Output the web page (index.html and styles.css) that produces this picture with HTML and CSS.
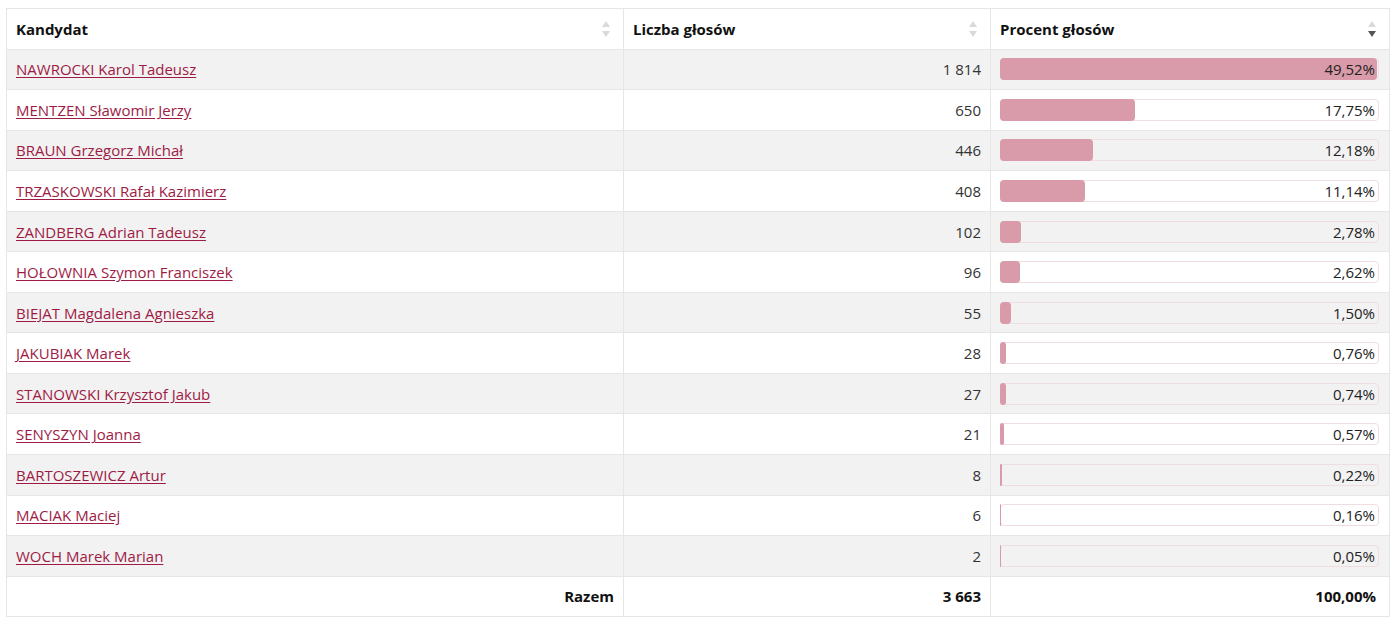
FILE: index.html
```html
<!DOCTYPE html>
<html lang="pl">
<head>
<meta charset="utf-8">
<title>Wyniki</title>
<link rel="stylesheet" href="styles.css">
</head>
<body>
<table class="results">
  <colgroup>
    <col class="c1"><col class="c2"><col class="c3">
  </colgroup>
  <thead>
    <tr>
      <th><div class="th-in"><span>Kandydat</span><span class="sort"><svg width="8" height="16" viewBox="0 0 8 16"><path d="M4 0L8 6H0Z" fill="#dadada"/><path d="M4 16L8 10H0Z" fill="#dadada"/></svg></span></div></th>
      <th><div class="th-in"><span>Liczba głosów</span><span class="sort"><svg width="8" height="16" viewBox="0 0 8 16"><path d="M4 0L8 6H0Z" fill="#dadada"/><path d="M4 16L8 10H0Z" fill="#dadada"/></svg></span></div></th>
      <th><div class="th-in"><span>Procent głosów</span><span class="sort"><svg width="8" height="16" viewBox="0 0 8 16"><path d="M4 0L8 6H0Z" fill="#dadada"/><path d="M4 16L8 10H0Z" fill="#555"/></svg></span></div></th>
    </tr>
  </thead>
  <tbody>
    <tr><td><a href="#">NAWROCKI Karol Tadeusz</a></td><td class="num">1 814</td><td><div class="bar"><div class="fill" style="width:100%"></div><span class="val">49,52%</span></div></td></tr>
    <tr><td><a href="#">MENTZEN Sławomir Jerzy</a></td><td class="num">650</td><td><div class="bar"><div class="fill" style="width:35.84%"></div><span class="val">17,75%</span></div></td></tr>
    <tr><td><a href="#">BRAUN Grzegorz Michał</a></td><td class="num">446</td><td><div class="bar"><div class="fill" style="width:24.6%"></div><span class="val">12,18%</span></div></td></tr>
    <tr><td><a href="#">TRZASKOWSKI Rafał Kazimierz</a></td><td class="num">408</td><td><div class="bar"><div class="fill" style="width:22.5%"></div><span class="val">11,14%</span></div></td></tr>
    <tr><td><a href="#">ZANDBERG Adrian Tadeusz</a></td><td class="num">102</td><td><div class="bar"><div class="fill" style="width:5.61%"></div><span class="val">2,78%</span></div></td></tr>
    <tr><td><a href="#">HOŁOWNIA Szymon Franciszek</a></td><td class="num">96</td><td><div class="bar"><div class="fill" style="width:5.29%"></div><span class="val">2,62%</span></div></td></tr>
    <tr><td><a href="#">BIEJAT Magdalena Agnieszka</a></td><td class="num">55</td><td><div class="bar"><div class="fill" style="width:3.03%"></div><span class="val">1,50%</span></div></td></tr>
    <tr><td><a href="#">JAKUBIAK Marek</a></td><td class="num">28</td><td><div class="bar"><div class="fill" style="width:1.53%"></div><span class="val">0,76%</span></div></td></tr>
    <tr><td><a href="#">STANOWSKI Krzysztof Jakub</a></td><td class="num">27</td><td><div class="bar"><div class="fill" style="width:1.49%"></div><span class="val">0,74%</span></div></td></tr>
    <tr><td><a href="#">SENYSZYN Joanna</a></td><td class="num">21</td><td><div class="bar"><div class="fill" style="width:1.15%"></div><span class="val">0,57%</span></div></td></tr>
    <tr><td><a href="#">BARTOSZEWICZ Artur</a></td><td class="num">8</td><td><div class="bar"><div class="fill" style="width:0.44%"></div><span class="val">0,22%</span></div></td></tr>
    <tr><td><a href="#">MACIAK Maciej</a></td><td class="num">6</td><td><div class="bar"><div class="fill" style="width:0.32%"></div><span class="val">0,16%</span></div></td></tr>
    <tr><td><a href="#">WOCH Marek Marian</a></td><td class="num">2</td><td><div class="bar"><div class="fill" style="width:0.1%"></div><span class="val">0,05%</span></div></td></tr>
  </tbody>
  <tfoot>
    <tr><td class="num">Razem</td><td class="num">3 663</td><td class="num total-pct">100,00%</td></tr>
  </tfoot>
</table>
</body>
</html>
```
FILE: styles.css
```css
html, body {
  margin: 0;
  padding: 0;
  background: #fff;
}
body {
  padding: 8px 11px 0 6px;
  font-family: "Open Sans", "Liberation Sans", sans-serif;
  font-size: 15px;
  color: #333;
}
.results {
  width: 1383px;
  border-collapse: collapse;
  table-layout: fixed;
  border: 1px solid #e3e3e3;
}
.c1 { width: 617px; }
.c2 { width: 367px; }
.c3 { width: 399px; }
.results th,
.results td {
  border: 1px solid #e6e6e6;
  height: 40.55px;
  padding: 0 9px 0 9px;
  line-height: 20px;
  vertical-align: middle;
  box-sizing: border-box;
}
.results th {
  text-align: left;
  font-weight: 700;
  color: #111;
  padding-right: 13px;
}
.th-in {
  display: flex;
  justify-content: space-between;
  align-items: center;
}
.sort {
  display: flex;
}
.sort svg { display: block; }
.results tbody tr:nth-child(odd) td {
  background: #f2f2f2;
}
.results a {
  color: #9e1b44;
  text-decoration: underline;
  text-underline-offset: 2px;
}
.num {
  text-align: right;
}
.results td.num {
  padding-right: 9px;
}
.bar {
  position: relative;
  height: 22px;
  border: 1px solid #efdde2;
  border-radius: 4px;
  box-sizing: border-box;
  margin-right: 1px;
}
.fill {
  position: absolute;
  left: -1px;
  top: -1px;
  bottom: -1px;
  background: #d99ba9;
  border-radius: 4px;
}
.val {
  position: relative;
  display: block;
  text-align: right;
  padding-right: 3px;
  line-height: 20px;
  color: #222;
}
.results tfoot td {
  font-weight: 700;
  color: #111;
}
.results td.total-pct {
  padding-right: 13px;
}
```
